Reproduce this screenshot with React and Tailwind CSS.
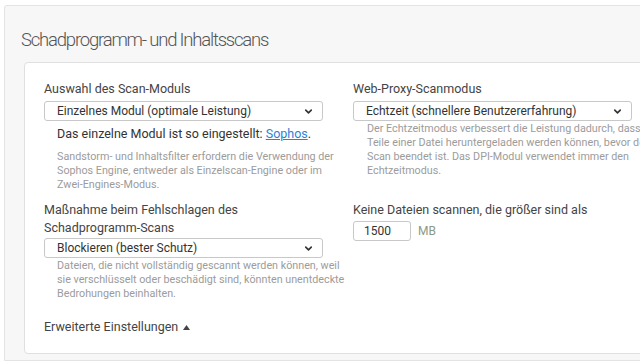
import { ChevronDown } from 'lucide-react';

function Select({ value }) {
    return (
        <div className="h-[20px] w-[279px] rounded-[3px] border border-[#c8c8c8] bg-white flex items-center justify-between pl-[12px] pr-[8px] text-[12px] text-[#333]">
            <span>{value}</span>
            <ChevronDown size={11} strokeWidth={3.5} className="text-[#333]" />
        </div>
    );
}

export default function App() {
    return (
        <div className="w-[640px] h-[363px] overflow-hidden bg-white pl-[4px] pt-[5px]" style={{ fontFamily: 'Roboto, "Noto Sans", sans-serif' }}>
            <div className="w-[700px] h-[356px] border border-[#e3e3e3] bg-[#f7f7f7] rounded-tl-[3px] pl-[19px] pt-[20px]">
                <h2 className="text-[18.5px] leading-[28px] font-light text-[#555] ml-[-3px] tracking-[-1.2px]">Schadprogramm- und Inhaltsscans</h2>
                <div className="mt-[8px] w-[640px] h-[292px] border border-[#e0e0e0] bg-white rounded-[4px] pl-[19px] pt-[17px] text-[#333]">
                    <div className="grid grid-cols-[279px_279px] gap-x-[30px] gap-y-[9px] items-start">
                        <div>
                            <div className="text-[12.5px] leading-[18px] text-[#444]">Auswahl des Scan-Moduls</div>
                            <div className="mt-[3px]"><Select value="Einzelnes Modul (optimale Leistung)" /></div>
                            <div className="mt-[4px] pl-[13px] text-[12.5px] leading-[18px] text-[#333]">
                                Das einzelne Modul ist so eingestellt: <span className="text-[#2f7fd6] underline">Sophos</span>.
                            </div>
                            <p className="mt-[7px] pl-[13px] w-[298px] text-[10.75px] leading-[14px] text-[#9c9c9c]">
                                Sandstorm- und Inhaltsfilter erfordern die Verwendung der Sophos Engine, entweder als Einzelscan-Engine oder im Zwei-Engines-Modus.
                            </p>
                        </div>
                        <div>
                            <div className="text-[12.5px] leading-[18px] text-[#444]">Web-Proxy-Scanmodus</div>
                            <div className="mt-[3px]"><Select value="Echtzeit (schnellere Benutzererfahrung)" /></div>
                            <p className="mt-[1px] pl-[14px] w-[304px] text-[10.75px] leading-[14px] text-[#9c9c9c]">
                                Der Echtzeitmodus verbessert die Leistung dadurch, dass Teile einer Datei heruntergeladen werden können, bevor der Scan beendet ist. Das DPI-Modul verwendet immer den Echtzeitmodus.
                            </p>
                        </div>
                        <div>
                            <div className="text-[12.5px] leading-[18px] text-[#444] w-[250px]">Maßnahme beim Fehlschlagen des Schadprogramm-Scans</div>
                            <div className="mt-[1px]"><Select value="Blockieren (bester Schutz)" /></div>
                            <p className="mt-[1px] pl-[13px] w-[308px] text-[10.75px] leading-[14px] text-[#9c9c9c]">
                                Dateien, die nicht vollständig gescannt werden können, weil sie verschlüsselt oder beschädigt sind, könnten unentdeckte Bedrohungen beinhalten.
                            </p>
                        </div>
                        <div>
                            <div className="text-[12.5px] leading-[18px] text-[#444]">Keine Dateien scannen, die größer sind als</div>
                            <div className="mt-[2px] flex items-center gap-[7px]">
                                <div className="h-[20px] w-[58px] rounded-[3px] border border-[#c8c8c8] bg-white pl-[10px] flex items-center text-[12px] text-[#333]">1500</div>
                                <span className="text-[12px] text-[#8a9a8a]">MB</span>
                            </div>
                        </div>
                    </div>
                    <div className="mt-[17px] text-[12.5px] leading-[18px] text-[#444] flex items-center gap-[5px]">
                        Erweiterte Einstellungen
                        <svg width="7" height="5" viewBox="0 0 7 5"><path d="M0 5 L3.5 0 L7 5 Z" fill="#444" /></svg>
                    </div>
                </div>
            </div>
        </div>
    );
}
